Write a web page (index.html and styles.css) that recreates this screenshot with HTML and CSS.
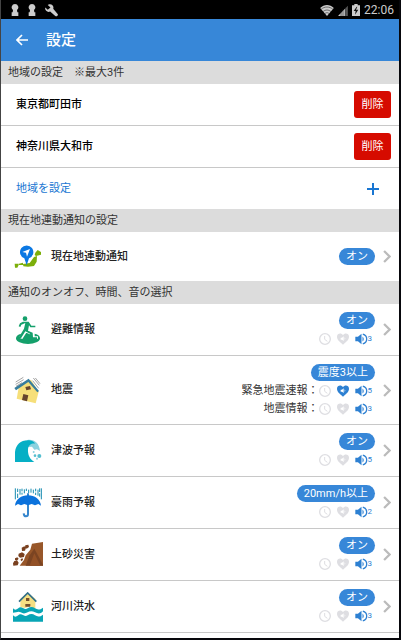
FILE: index.html
```html
<!DOCTYPE html>
<html lang="ja">
<head>
    <meta charset="UTF-8">
    <meta name="viewport" content="width=device-width, initial-scale=1.0">
    <title>設定</title>
    <link rel="stylesheet" href="styles.css">
</head>
<body>
    <!-- 共通アイコン -->
    <svg class="defs" aria-hidden="true">
        <symbol id="keyhole" viewBox="0 0 24 36">
            <path d="M12 0a10 10 0 0 1 6 18l1 7h3v11H2V25h3l1-7a10 10 0 0 1 6-18z"/>
        </symbol>
        <symbol id="clock" viewBox="0 0 36 36">
            <circle cx="18" cy="18" r="16" fill="none" stroke="currentColor" stroke-width="4"/>
            <path d="M17 9v10l8 6" fill="none" stroke="currentColor" stroke-width="3"/>
        </symbol>
        <symbol id="heart" viewBox="0 0 36 36">
            <path d="M18 35C7 25 0 20 0 11 0 0 13-2 18 6c5-8 18-6 18 5 0 9-7 14-18 24z" fill="currentColor"/>
            <path d="M11 14h4l5-4v14l-5-4h-4zM23 13q4 4 0 8z" fill="#fff"/>
        </symbol>
        <symbol id="speaker" viewBox="0 0 40 36">
            <path d="M1 11h8L20 2v32L9 25H1z" fill="currentColor"/>
            <path d="M23 10q8 8 0 16z" fill="currentColor"/>
            <path d="M24 3c16 5 16 25 0 30" fill="none" stroke="currentColor" stroke-width="4"/>
        </symbol>
        <symbol id="chevron" viewBox="0 0 24 40">
            <path d="M3 3l17 17L3 37" fill="none" stroke="currentColor" stroke-width="7"/>
        </symbol>
    </svg>

    <div class="screen">
        <div class="status">
            <div class="status-left">
                <svg class="keyhole"><use href="#keyhole"/></svg>
                <svg class="keyhole"><use href="#keyhole"/></svg>
                <svg class="wrench" viewBox="0 0 38 38"><path d="M12 1C20-1 27 6 24 14l13 15c3 4-3 9-7 6L15 22C7 26-2 18 1 10l7 7 8-7-8-7z"/></svg>
            </div>
            <div class="status-right">
                <svg class="wifi" viewBox="0 0 42 34"><path d="M21 34L0 9C12-3 30-3 42 9z"/><path d="M3 13c11-9 25-9 36 0M9 20c7-6 17-6 24 0M15 26c4-3 8-3 12 0" fill="none" stroke="#333" stroke-width="2"/></svg>
                <svg class="signal" viewBox="0 0 30 34"><path d="M30 2v32H0z" fill="#555"/><path d="M22 11v23H0z"/><path d="M9 20v14M15 14v20M22 8v26" stroke="#222" stroke-width="2"/></svg>
                <svg class="battery" viewBox="0 0 24 36"><path d="M7 0h10v4h7v32H0V4h7z"/><path d="M14 8L5 21h6l-2 11 10-15h-7l4-9z" fill="#111"/></svg>
                <span class="time">22:06</span>
            </div>
        </div>

        <header class="header">
            <a class="back" href="#" aria-label="戻る">
                <svg viewBox="0 0 36 34"><path d="M36 17H3M18 2L3 17l15 15" fill="none" stroke="#fff" stroke-width="5"/></svg>
            </a>
            <h1>設定</h1>
        </header>

        <main>
            <!-- 地域 -->
            <h2>地域の設定　※最大3件</h2>
            <ul class="areas">
                <li><span>東京都町田市</span><button class="delete" type="button">削除</button></li>
                <li><span>神奈川県大和市</span><button class="delete" type="button">削除</button></li>
            </ul>
            <button class="add" type="button">
                <span>地域を設定</span>
                <svg viewBox="0 0 36 36"><path d="M18 0v36M0 18h36" stroke="#1976d2" stroke-width="6"/></svg>
            </button>

            <!-- 現在地 -->
            <h2>現在地連動通知の設定</h2>
            <a class="row row-location" href="#">
                <svg class="icon" viewBox="0 0 90 90">
                    <path d="M5 65h12v4l-4 8H6zM18 65l12-3v7H18zM30 66l20-3 13-18 9-3-1 17-8 13-18 2-14-1zM65 39l2-7 7-8 10 6v8l-15 4z" fill="#7caf0a"/>
                    <path d="M41 70L34 49a20 20 0 1 1 14 0z" fill="#0b78e3"/>
                    <path d="M51 21L42 44l-3-12-11-2z" fill="#fff"/>
                </svg>
                <span class="name">現在地連動通知</span>
                <span class="pill">オン</span>
                <svg class="chevron"><use href="#chevron"/></svg>
            </a>

            <!-- 通知の種類 -->
            <h2>通知のオンオフ、時間、音の選択</h2>
            <a class="row" href="#">
                <svg class="icon" viewBox="0 0 90 90">
                    <ellipse cx="45" cy="70" rx="36" ry="17" fill="#14a06b"/>
                    <path d="M31 45L18 68l10 4 12-19 14 6v12h21v-7H65V51L55 40z" fill="#fff"/>
                    <circle cx="36" cy="11" r="7" fill="#14a06b"/>
                    <path d="M30 20h17l8 12h12v5H52l-4-6-3 16 14 6 1 14h12v5H53l-2-16-14-7-13 21h-8l17-29 4-17-12 5-3 7-5-2 4-9z" fill="#14a06b"/>
                </svg>
                <span class="name">避難情報</span>
                <span class="state">
                    <span class="pill">オン</span>
                    <span class="sounds"><svg class="off"><use href="#clock"/></svg><svg class="off"><use href="#heart"/></svg><svg class="speaker"><use href="#speaker"/></svg><small>3</small></span>
                </span>
                <svg class="chevron"><use href="#chevron"/></svg>
            </a>
            <a class="row row-quake" href="#">
                <svg class="icon" viewBox="0 0 90 90">
                    <path d="M17 38l37-24 23 36-9 35-57-14z" fill="#f6df7a"/>
                    <path d="M4 39L47 11l31 37-5 4-27-31L9 46z" fill="#387d9d"/>
                    <path d="M37 36l14-3 3 10-14 3zM31 57l15 4-4 18-15-4z" fill="#66452e"/>
                    <path d="M8 21l23-14M8 28l24-14M9 34l18-11M61 9l18 22M67 9l14 17M59 17l18 23" stroke="#777" stroke-width="2"/>
                </svg>
                <span class="name">地震</span>
                <span class="state">
                    <span class="pill">震度3以上</span>
                    <span class="sounds">緊急地震速報：<svg class="off"><use href="#clock"/></svg><svg><use href="#heart"/></svg><svg class="speaker"><use href="#speaker"/></svg><small>5</small></span>
                    <span class="sounds">地震情報：<svg class="off"><use href="#clock"/></svg><svg class="off"><use href="#heart"/></svg><svg class="speaker"><use href="#speaker"/></svg><small>3</small></span>
                </span>
                <svg class="chevron"><use href="#chevron"/></svg>
            </a>
            <a class="row" href="#">
                <svg class="icon" viewBox="0 0 90 90">
                    <path d="M43 12c21-3 36 10 38 33l-9-5-8 1-7-9-12 1z" fill="#8bd2df"/>
                    <path d="M6 78V48C9 24 25 11 49 13c8 1 13 4 18 10-11-2-21 4-22 17-1 16 5 30 19 38z" fill="#06afc5"/>
                    <circle cx="79" cy="60" r="6" fill="#55bfd0"/><circle cx="66" cy="59" r="4" fill="#55bfd0"/><circle cx="62" cy="48" r="3" fill="#8bd2df"/><circle cx="72" cy="68" r="3" fill="#8bd2df"/>
                </svg>
                <span class="name">津波予報</span>
                <span class="state">
                    <span class="pill">オン</span>
                    <span class="sounds"><svg class="off"><use href="#clock"/></svg><svg class="off"><use href="#heart"/></svg><svg class="speaker"><use href="#speaker"/></svg><small>5</small></span>
                </span>
                <svg class="chevron"><use href="#chevron"/></svg>
            </a>
            <a class="row" href="#">
                <svg class="icon" viewBox="0 0 90 90">
                    <path d="M7 1v33M14 2v10M14 17v13M21 3v17M27 2v8M27 14v6M34 4v12M40 2v7M47 5v10M54 2v12M61 5v11M68 2v8M68 14v7M75 5v18M80 1v11M80 16v10M85 1v33" stroke="#168bb0" stroke-width="3"/>
                    <path d="M45 16v62q0 7-6 7t-7-9" fill="none" stroke="#3686cd" stroke-width="6"/>
                    <path d="M6 53C8 34 25 22 45 22s37 12 39 31l-8-5-10 4-10-4-11 4-11-4-10 4-9-4z" fill="#0b72dc"/>
                </svg>
                <span class="name">豪雨予報</span>
                <span class="state">
                    <span class="pill">20mm/h以上</span>
                    <span class="sounds"><svg class="off"><use href="#clock"/></svg><svg class="off"><use href="#heart"/></svg><svg class="speaker"><use href="#speaker"/></svg><small>2</small></span>
                </span>
                <svg class="chevron"><use href="#chevron"/></svg>
            </a>
            <a class="row" href="#">
                <svg class="icon" viewBox="0 0 90 90">
                    <path d="M20 77l13-17 5-14 14-17 5-18 33-5v71z" fill="#98572a"/>
                    <path d="M38 77l12-31 14-20 12 22 14 26v3z" fill="#7b4422"/>
                    <path d="M50 77l14-37 18 37z" fill="#935126"/>
                    <path d="M0 70l4-7 8-2 5 7-3 8-13 1zM17 41l10-4 8 5-2 9-12 2-5-5zM26 23l8-4 5 4-3 9-9 1zM37 16l9-2 2 7-7 5-5-4zM6 55l7-3 4 4-4 5-7-1zM23 57l6-2 1 5-6 4z" fill="#79401f"/>
                </svg>
                <span class="name">土砂災害</span>
                <span class="state">
                    <span class="pill">オン</span>
                    <span class="sounds"><svg class="off"><use href="#clock"/></svg><svg class="off"><use href="#heart"/></svg><svg class="speaker"><use href="#speaker"/></svg><small>3</small></span>
                </span>
                <svg class="chevron"><use href="#chevron"/></svg>
            </a>
            <a class="row" href="#">
                <svg class="icon" viewBox="0 0 90 90">
                    <path d="M22 20L44 2l23 18v32l-15-9-16 5-14-3z" fill="#f5df83"/>
                    <path d="M18 29L44 3l26 26" fill="none" stroke="#316f8b" stroke-width="5"/>
                    <path d="M39 18h10v9H39zM37 36h15v8H37z" fill="#74502f"/>
                    <path d="M0 49c10 11 16-5 24-3s12 8 20 3 15-5 22 0 15 5 24-2v11c-8 9-16 7-24 3s-15-4-22 0-14 5-21 0-13 1-23 1z" fill="#08a5b5"/>
                    <path d="M0 70c10 11 16-5 24-3s12 8 20 3 15-5 22 0 15 5 24-2v21H0z" fill="#08a5b5"/>
                </svg>
                <span class="name">河川洪水</span>
                <span class="state">
                    <span class="pill">オン</span>
                    <span class="sounds"><svg class="off"><use href="#clock"/></svg><svg class="off"><use href="#heart"/></svg><svg class="speaker"><use href="#speaker"/></svg><small>3</small></span>
                </span>
                <svg class="chevron"><use href="#chevron"/></svg>
            </a>
        </main>
    </div>
</body>
</html>
```

FILE: styles.css
```css
* {
    box-sizing: border-box;
}
body {
    margin: 0;
    font-family: Roboto, "Noto Sans CJK JP", sans-serif;
    font-size: 11px;
    line-height: 16px;
    color: #222;
}
svg {
    display: block;
    flex: none;
}
.defs {
    display: none;
}
.screen {
    min-height: 100vh;
    background: #fff;
    border: solid #08080c;
    border-width: 0 2px 2px 0;
    border-left: 1px solid #444;
}

/* ステータスバー */
.status {
    display: flex;
    justify-content: space-between;
    height: 19px;
    padding: 1px 5px 0 10px;
    background: #000;
    color: #ccc;
    fill: #ccc;
}
.status-left,
.status-right {
    display: flex;
    align-items: center;
}
.status-left {
    gap: 9px;
}
.status-right {
    gap: 4px;
}
.keyhole {
    width: 8px;
    height: 12px;
}
.wrench {
    width: 13px;
    height: 13px;
}
.wifi {
    width: 14px;
    height: 11px;
}
.signal {
    width: 10px;
    height: 11px;
}
.battery {
    width: 8px;
    height: 12px;
}
.time {
    font-size: 12px;
}

/* ヘッダー */
.header {
    display: flex;
    align-items: center;
    gap: 18px;
    height: 42px;
    padding: 0 15px;
    background: #3787d8;
    color: #fff;
}
.back svg {
    width: 12px;
    height: 12px;
}
h1 {
    margin: 0;
    font-size: 15px;
    font-weight: 500;
}
h2 {
    height: 23px;
    margin: 0;
    padding: 0 7px;
    background: #dcdcdc;
    color: #333;
    font-size: 11px;
    font-weight: 400;
    line-height: 24px;
}

/* 地域 */
.areas {
    margin: 0;
    padding: 0;
    list-style: none;
}
.areas li {
    display: flex;
    align-items: center;
    justify-content: space-between;
    height: 42px;
    padding: 0 8px 0 15px;
    border-bottom: 1px solid #c8c8c8;
    color: #000;
    font-weight: 500;
}
.delete {
    width: 37px;
    height: 27px;
    padding: 0;
    border: 0;
    border-radius: 3px;
    background: #d60b00;
    color: #fff;
    font: inherit;
    font-weight: 400;
}
.add {
    display: flex;
    align-items: center;
    justify-content: space-between;
    width: 100%;
    height: 41px;
    padding: 0 20px 0 15px;
    border: 0;
    background: none;
    color: #1976d2;
    font: inherit;
}
.add svg {
    width: 12px;
    height: 12px;
}

/* 通知の行 */
.row {
    display: flex;
    align-items: center;
    height: 52px;
    padding: 0 8px 0 12px;
    border-bottom: 1px solid #c8c8c8;
    color: #222;
    text-decoration: none;
}
.row-location {
    height: 49px;
    border-bottom: 0;
}
.row-quake {
    height: 69px;
}
.icon {
    width: 30px;
    height: 30px;
}
.name {
    flex: 1;
    padding-left: 8px;
    font-weight: 500;
}
.state {
    display: flex;
    flex-direction: column;
    align-items: flex-end;
    gap: 2px;
}
.pill {
    padding: 0 7px;
    border-radius: 9px;
    background: #3787d8;
    color: #fff;
    line-height: 17px;
}
.sounds {
    display: flex;
    align-items: center;
    height: 16px;
    padding-right: 3px;
    color: #333;
}
.sounds svg {
    width: 12px;
    height: 12px;
    margin-right: 6px;
    color: #2d80d2;
}
.sounds .off {
    color: #dedee2;
}
.sounds .speaker {
    width: 13px;
    margin-right: 0;
}
.sounds small {
    color: #2d80d2;
    font-size: 8px;
}
.chevron {
    width: 8px;
    height: 13px;
    margin-left: 8px;
    color: #bbb;
}
```
